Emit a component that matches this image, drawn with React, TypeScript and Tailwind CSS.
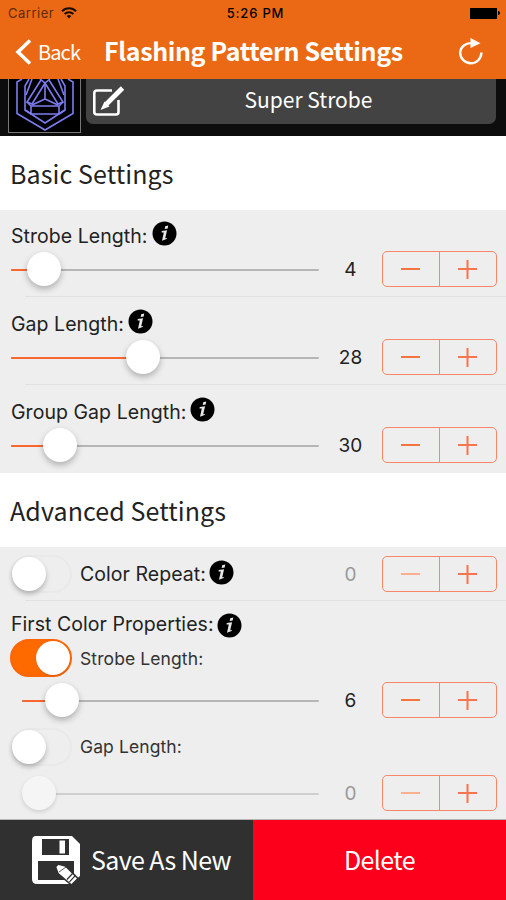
import clsx from "clsx";

const BasicSettings = [
  { label: "Strobe Length:", value: 4, position: 33 },
  { label: "Gap Length:", value: 28, position: 132 },
  { label: "Group Gap Length:", value: 30, position: 49 },
];

const StatusBar = () => (
  <div className="flex h-[26px] items-center justify-between pl-2 pr-[6px] [font-family:Inter,sans-serif] text-[13px] text-black">
    <div className="flex w-[180px] items-center gap-[7px] text-[#5f2a08]">
      <span className="mt-[2px] tracking-[0.5px]">Carrier</span>
      <svg width="16" height="12" viewBox="0 0 16 12" fill="none" stroke="#1c0d03" strokeWidth="2">
        <path d="M1 4.2a10 10 0 0 1 14 0M3.6 7a6.2 6.2 0 0 1 8.8 0" />
        <path d="M8 11.5 5.7 9.1a3.3 3.3 0 0 1 4.6 0z" fill="#1c0d03" stroke="none" />
      </svg>
    </div>
    <span className="mt-[2px] pl-[3px] font-medium tracking-[0.8px]">5:26 PM</span>
    <div className="flex w-[180px] items-center justify-end gap-px">
      <div className="h-[11px] w-[27px] bg-black" />
      <div className="h-1 w-[2px] rounded-r-full bg-black" />
    </div>
  </div>
);

const NavBar = () => (
  <div className="flex h-[53px] items-center pl-[15px] text-white">
    <button type="button" className="flex w-[89px] items-center gap-[7px] pb-[2px]">
      <svg width="17" height="26" viewBox="0 0 17 26" fill="none" stroke="currentColor" strokeWidth="3.6">
        <path d="M15 1.5 3 13l12 11.5" />
      </svg>
      <span className="-ml-px text-[20px] leading-6 tracking-[-0.9px]">Back</span>
    </button>
    <h1 className="w-[354px] whitespace-nowrap pb-[6px] text-[25px] font-bold leading-7 tracking-[-0.38px]">
      Flashing Pattern Settings
    </h1>
    <svg className="mb-[2px]" width="26" height="30" viewBox="0 0 26 30" fill="none" stroke="currentColor" strokeWidth="2.4">
      <path d="M14 6.2C8 5.5 2.2 9.8 2.2 16.1c0 5.3 4.7 10.2 10.6 10.2s10.6-4.6 10.6-10.7" />
      <path d="m12.5 1 10 5.3-10 4.6z" fill="currentColor" stroke="none" />
    </svg>
  </div>
);

const PatternLogo = () => (
  <svg className="shrink-0 border border-t-0 border-[#777] bg-black" width="73" height="54" viewBox="0 0 71 53" fill="none" stroke="#7c7cf0" strokeWidth="1.6">
    <path d="M13 0 8 3v31.5L36 51l28-16.500V3l-5-3" />
    <path d="M20 0 16 7v24l20 13 20-13V7l-4-7" />
    <path d="M23 0 17 16M32 1 18 23l5 2L36 4l13 21 5-2L40 1M49 0l6 16" />
    <path d="M31 0l5 4 5-4M36 4v16M36 20l-13 6m13-6 13 6" />
    <path d="M22 27h28v8H22zM18 23l4 4M54 23l-4 4M16 31l6 4M56 31l-6 4" />
  </svg>
);

const InfoIcon = ({ className }: { className?: string }) => (
  <svg className={clsx("shrink-0", className)} width="25" height="25" viewBox="0 0 25 25">
    <circle cx="12.5" cy="12.5" r="12" fill="#000" />
    <path d="m13.2 5.2 3-.6-.5 2.8-3 .5zM9.800 10l5.300-.8-1.900 8 1.700-.3-.3 1.200-4.600 1.600 1.800-8.200-2.300-.1z" fill="#e8e8e8" />
  </svg>
);

const Slider = ({ position, disabled = false }: { position: number; disabled?: boolean }) => (
  <div className="relative flex h-9 flex-1 items-center">
    <div className={clsx("mt-px h-[2px] w-full rounded-full", disabled ? "bg-[#cfcfcf]" : "bg-[#b6b6b6]")} />
    {!disabled && (
      <div className="absolute left-0 mt-px h-[2px] rounded-full bg-[#fa6630]" style={{ width: position }} />
    )}
    <div
      className={clsx(
        "absolute size-[34px] -translate-x-1/2 rounded-full",
        disabled ? "bg-[#f5f5f5] shadow-[0_2px_4px_rgba(0,0,0,0.13)]" : "bg-white shadow-[0_3px_6px_rgba(0,0,0,0.27)]",
      )}
      style={{ left: position }}
    />
  </div>
);

const Stepper = ({ atMinimum = false }: { atMinimum?: boolean }) => (
  <div className="mr-[9px] grid h-9 w-[115px] shrink-0 grid-cols-2 rounded-[5px] border-[1.5px] border-[#f98767] text-[#f7754c]">
    <button type="button" className="flex items-center justify-center border-r-[1.5px] border-[#f98767]">
      <span className={clsx("h-[2px] w-[19px]", atMinimum ? "bg-[#f9b08f]" : "bg-[#f5743f]")} />
    </button>
    <button type="button" className="flex items-center justify-center">
      <svg width="19" height="19" viewBox="0 0 19 19" stroke="currentColor" strokeWidth="2">
        <path d="M0 9h19M9.500 0v19" />
      </svg>
    </button>
  </div>
);

const Value = ({ value, disabled = false }: { value: number; disabled?: boolean }) => (
  <span className={clsx("mt-[2px] w-[63px] shrink-0 text-center text-[19px] tracking-[0.2px]", disabled ? "text-[#999]" : "text-[#222]")}>
    {value}
  </span>
);

const Switch = ({ on = false }: { on?: boolean }) => (
  <div
    className={clsx(
      "flex h-[38px] w-[62px] shrink-0 items-center rounded-full border-2",
      on ? "justify-end border-[#fb6606] bg-[#ff6a00]" : "border-[#e9e9e9]",
    )}
  >
    <div className={clsx("size-[34px] shrink-0 rounded-full bg-white", on ? "shadow-[0_1px_2px_rgba(0,0,0,0.15)]" : "shadow-[0_3px_5px_rgba(0,0,0,0.25)]")} />
  </div>
);

const SaveIcon = () => (
  <svg width="50" height="50" viewBox="0 0 50 50">
    <path d="M5 1h36l8 8v32l-9 8H6q-5 0-5-5V6q0-5 4-5z" fill="#fff" />
    <path d="M11 4h27v16H11zM7 26h36v19H7z" fill="#303030" />
    <path d="M28.500 5.500h5.500v13h-5.500z" fill="#fff" />
    <path d="m23 28 11.500 3L47 43.500 40.500 50 27 38.500z" fill="#fff" stroke="#303030" strokeWidth="1.6" />
    <path d="m23 28 5 1.500-3.200 3z" fill="#303030" />
    <path d="m36 44.500 6-6.500m-3.500 8.800 6-6.500" stroke="#303030" strokeWidth="1.2" />
    <path d="m28 37 7-5" stroke="#303030" strokeWidth="0.8" />
  </svg>
);

const SectionTitle = ({ children }: { children: string }) => (
  <h2 className="flex h-[74px] items-center bg-white pl-[10px] text-[25px] tracking-[0.1px] text-[#222]">
    <span className="mt-[1px]">{children}</span>
  </h2>
);

export default function App() {
  return (
    <main className="flex h-[900px] w-[506px] flex-col overflow-hidden bg-[#eeeeee] [font-family:'Noto_Sans_CJK_SC',sans-serif]">
      <header className="h-[79px] bg-[#eb6914]">
        <StatusBar />
        <NavBar />
      </header>

      <section className="flex h-[57px] bg-[#0d0d0d] pl-2 pr-[10px]">
        <PatternLogo />
        <div className="ml-[5px] flex h-[45px] flex-1 items-center rounded-b-[7px] bg-[#434343] text-white">
          <svg className="ml-[6px]" width="32" height="32" viewBox="0 0 32 32" fill="none" stroke="currentColor" strokeWidth="2.6">
            <path d="M20 4.500H5Q2.300 4.500 2.300 7v19q0 2.500 2.700 2.500h19q2.500 0 2.500-2.500V14" />
            <path d="M30.500 2 14.500 18" strokeWidth="4.800" />
            <path d="m12.500 15.500-4 8.500 9-3.500z" fill="currentColor" stroke="none" />
          </svg>
          <span className="flex-1 pb-[4px] pr-[4px] pl-[1px] text-center text-[21px]">Super Strobe</span>
        </div>
      </section>

      <SectionTitle>Basic Settings</SectionTitle>

      <section className="h-[263px] [font-family:Inter,sans-serif]">
        {BasicSettings.map((setting, index) => (
          <div key={setting.label} className="relative h-[88px] pl-[11px] pt-[11px]">
            <div className="flex h-[25px] items-center gap-1">
              <span className="mt-[5px] text-[19.5px] leading-6 tracking-[0.05px] text-[#222]">{setting.label}</span>
              <InfoIcon />
            </div>
            <div className="mt-[5px] flex items-center">
              <Slider position={setting.position} />
              <Value value={setting.value} />
              <Stepper />
            </div>
            {index < 2 && <div className="absolute bottom-px left-[25px] right-0 h-px bg-[#e1e1e1]" />}
          </div>
        ))}
      </section>

      <SectionTitle>Advanced Settings</SectionTitle>

      <section className="h-[273px] border-b border-[#b5b5b5] [font-family:Inter,sans-serif]">
        <div className="relative flex h-[54px] items-center pl-[10px]">
          <Switch />
          <div className="ml-2 flex flex-1 items-center gap-[3px]">
            <span className="mt-[2px] text-[19.5px] tracking-[0.05px] text-[#222]">Color Repeat:</span>
            <InfoIcon className="-mt-1" />
          </div>
          <Value value={0} disabled />
          <Stepper atMinimum />
          <div className="absolute bottom-0 left-[25px] right-0 h-px bg-[#e1e1e1]" />
        </div>

        <div className="flex h-[37px] items-center gap-[3px] pl-[11px] pt-[11px]">
          <span className="-mt-[2px] text-[19.5px] leading-6 tracking-[0.05px] text-[#222]">First Color Properties:</span>
          <InfoIcon />
        </div>
        <div className="flex h-[40px] items-center gap-2 pl-[10px]">
          <Switch on />
          <span className="mt-[2px] text-[17.5px] tracking-[0.1px] text-[#333]">Strobe Length:</span>
        </div>
        <div className="mt-[4px] flex items-center pl-[22px]">
          <Slider position={40} />
          <Value value={6} />
          <Stepper />
        </div>
        <div className="mt-[10px] flex h-[38px] items-center gap-2 pl-[10px]">
          <Switch />
          <span className="text-[17.5px] tracking-[0.1px] text-[#333]">Gap Length:</span>
        </div>
        <div className="mt-[9px] flex items-center pl-[22px]">
          <Slider position={17} disabled />
          <Value value={0} disabled />
          <Stepper atMinimum />
        </div>
      </section>

      <footer className="grid h-20 grid-cols-2 text-[25px] tracking-[-0.6px] text-white">
        <button type="button" className="flex items-center gap-[10px] bg-[#303030] pl-[31px]">
          <SaveIcon />
          <span className="whitespace-nowrap">Save As New</span>
        </button>
        <button type="button" className="bg-[#fc001b]">Delete</button>
      </footer>
    </main>
  );
}
